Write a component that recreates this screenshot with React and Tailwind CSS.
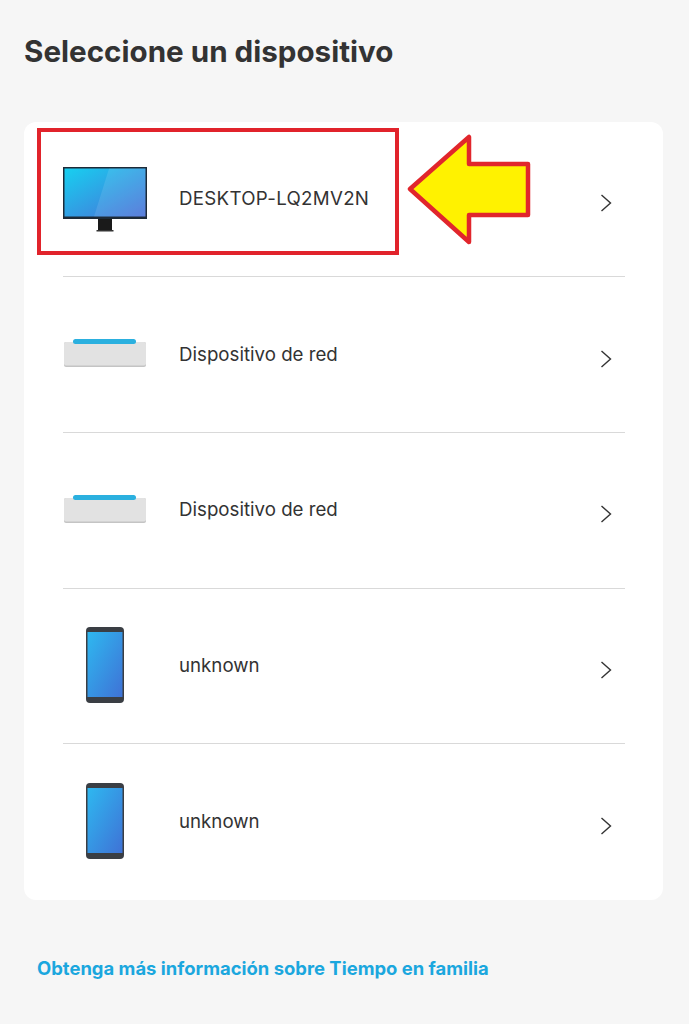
import React from "react";

const devices = [
  { name: "DESKTOP-LQ2MV2N", type: "desktop" },
  { name: "Dispositivo de red", type: "node" },
  { name: "Dispositivo de red", type: "node" },
  { name: "unknown", type: "phone" },
  { name: "unknown", type: "phone" },
];

function DesktopIcon() {
  return (
    <svg width="84" height="66" viewBox="0 0 84 66" className="block mt-[2px]">
      <defs>
        <linearGradient id="screenGrad" x1="0" y1="0" x2="1" y2="1">
          <stop offset="0" stopColor="#17d0f0" />
          <stop offset="1" stopColor="#4a6fd8" />
        </linearGradient>
      </defs>
      <rect x="35" y="51" width="14" height="12" fill="#1a1a1a" />
      <rect x="33.5" y="63" width="17" height="1.5" fill="#333" />
      <rect x="0" y="0" width="84" height="52" fill="#1d2a38" />
      <rect x="1.5" y="1.5" width="81" height="48" fill="url(#screenGrad)" />
      <path d="M46 1.5 H82.5 V49.5 H31 Z" fill="#ffffff" opacity="0.1" />
    </svg>
  );
}

function NodeIcon() {
  return (
    <svg width="84" height="32" viewBox="0 0 84 32" className="block mb-[5px]">
      <rect x="1" y="6" width="82" height="25" rx="2" fill="#c4c4c4" />
      <rect x="1" y="6" width="82" height="23.5" rx="2" fill="#e2e2e2" />
      <rect x="10" y="3" width="63" height="5" rx="2.5" fill="#2bb0df" />
    </svg>
  );
}

function PhoneIcon({ id }) {
  return (
    <svg width="38" height="76" viewBox="0 0 38 76" className="block mb-[2px]">
      <defs>
        <linearGradient id={id} x1="0" y1="0" x2="1" y2="1">
          <stop offset="0" stopColor="#2eb8f0" />
          <stop offset="1" stopColor="#3f72d6" />
        </linearGradient>
      </defs>
      <rect x="0" y="0" width="38" height="76" rx="4" fill="#3a3e44" />
      <rect x="1.5" y="5" width="35" height="65" fill={`url(#${id})`} />
    </svg>
  );
}

function Chevron() {
  return (
    <svg width="12" height="18" viewBox="0 0 12 18" fill="none" className="block">
      <path d="M1.5 1 L10.5 9 L1.5 17" stroke="#333333" strokeWidth="1.4" />
    </svg>
  );
}

export default function App() {
  return (
    <div className="relative min-h-[1024px] bg-[#f6f6f6] font-['Inter','Noto_Sans',sans-serif] overflow-hidden">
      <div className="pt-[33px] px-6">
        <h1 className="text-[29.6px] leading-9 font-bold text-[#333333]">Seleccione un dispositivo</h1>

        <div className="mt-[52.5px] bg-white rounded-xl pl-[39px] pr-[38px] mr-[2px]">
          {devices.map((d, i) => (
            <div
              key={i}
              className={`h-[155.7px] flex items-center ${i < devices.length - 1 ? "border-b border-[#d9d9d9]" : ""}`}
            >
              <div className="w-[116px] flex justify-center pr-[32px] shrink-0">
                {d.type === "desktop" && <DesktopIcon />}
                {d.type === "node" && <NodeIcon />}
                {d.type === "phone" && <PhoneIcon id={`phoneGrad${i}`} />}
              </div>
              <span className={`flex-1 text-[18.7px] text-[#333333] ${d.type === "desktop" ? "tracking-[0.3px]" : ""}`}>
                {d.name}
              </span>
              <div className="mr-[13px] mt-[8px]">
                <Chevron />
              </div>
            </div>
          ))}
        </div>

        <a className="block mt-[56px] ml-[13px] text-[18.45px] leading-6 font-bold text-[#1ba7de]">
          Obtenga más información sobre Tiempo en familia
        </a>
      </div>

      {/* annotation drawn on top of the screenshot */}
      <div className="absolute left-[37px] top-[128px] w-[362px] h-[127px] border-4 border-[#e1232b]" />
      <svg width="124" height="112" viewBox="0 0 124 112" className="absolute left-[407px] top-[134px]">
        <path d="M3 55 L62 3 V30 H121 V81 H62 V108 Z" fill="#fff200" stroke="#e1262c" strokeWidth="4.5" strokeLinejoin="round" />
      </svg>
    </div>
  );
}
